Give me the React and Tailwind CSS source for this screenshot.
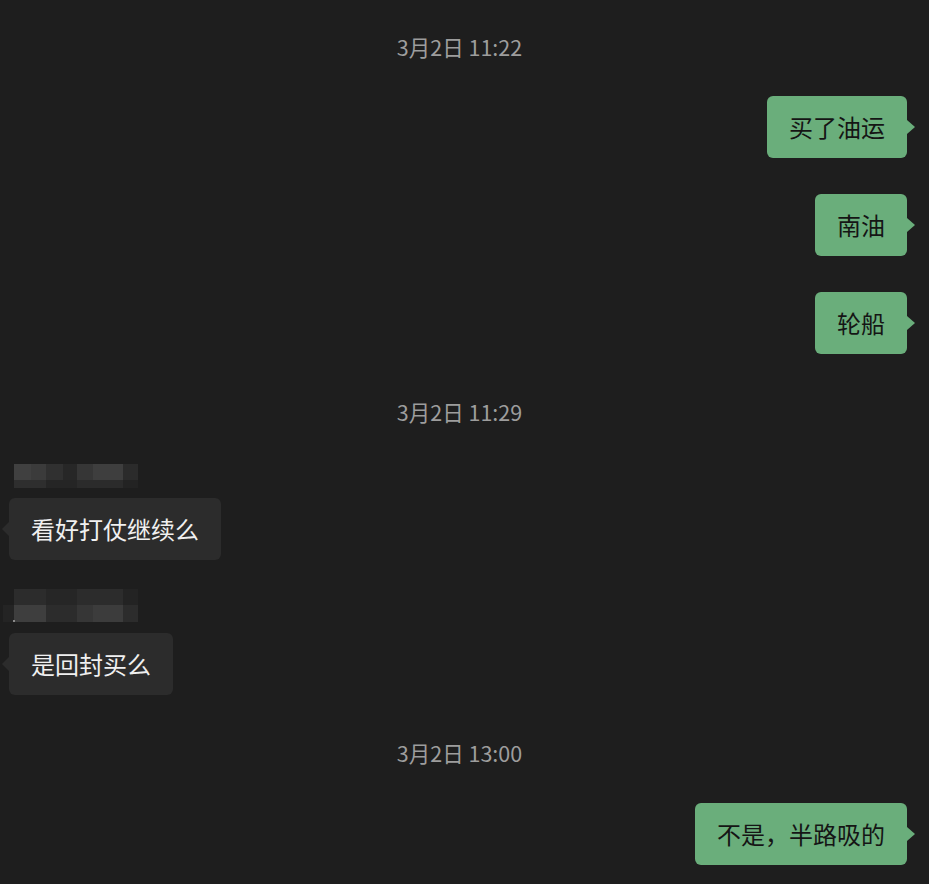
import React from "react";

const font = { fontFamily: '"Noto Sans CJK SC", "Noto Sans", sans-serif' };

function Time({ text, className }) {
  return (
    <div className={"flex h-[28px] items-center justify-center text-[21.5px] text-[#9d9d9d] " + className}>
      {text}
    </div>
  );
}

function Right({ text, className }) {
  return (
    <div className={"flex justify-end pr-[14px] " + className}>
      <div className="flex items-center">
        <div className="flex h-[62px] items-center rounded-[6px] bg-[#6aae7b] px-[22px] text-[24px] leading-none text-[#151515]">
          {text}
        </div>
        <div className="h-0 w-0 border-y-[7px] border-l-[8px] border-y-transparent border-l-[#6aae7b]" />
      </div>
    </div>
  );
}

function Left({ text, className }) {
  return (
    <div className={"flex justify-start pl-[2px] " + className}>
      <div className="flex items-center">
        <div className="h-0 w-0 border-y-[7px] border-r-[7px] border-y-transparent border-r-[#2c2c2c]" />
        <div className="flex h-[62px] items-center rounded-[6px] bg-[#2c2c2c] px-[22px] text-[24px] leading-none text-[#f0f0f0]">
          {text}
        </div>
      </div>
    </div>
  );
}

function Mosaic1() {
  return (
    <svg width="140" height="24" className="block">
      <rect x="14" y="0" width="17" height="16" fill="#404040" />
      <rect x="31" y="0" width="15" height="16" fill="#3b3b3b" />
      <rect x="46" y="0" width="17" height="16" fill="#303030" />
      <rect x="63" y="0" width="14" height="16" fill="#272727" />
      <rect x="77" y="0" width="16" height="16" fill="#363636" />
      <rect x="93" y="0" width="30" height="16" fill="#3e3e3e" />
      <rect x="123" y="0" width="15" height="16" fill="#2b2b2b" />
      <rect x="14" y="16" width="32" height="8" fill="#2e2e2e" />
      <rect x="46" y="16" width="31" height="8" fill="#252525" />
      <rect x="77" y="16" width="46" height="8" fill="#2b2b2b" />
      <rect x="123" y="16" width="15" height="8" fill="#232323" />
    </svg>
  );
}

function Mosaic2() {
  return (
    <svg width="140" height="33" className="block">
      <rect x="14" y="0" width="32" height="16" fill="#2c2c2c" />
      <rect x="46" y="0" width="31" height="16" fill="#262626" />
      <rect x="77" y="0" width="46" height="16" fill="#2c2c2c" />
      <rect x="123" y="0" width="15" height="16" fill="#232323" />
      <rect x="3" y="16" width="11" height="17" fill="#242424" />
      <rect x="14" y="16" width="32" height="17" fill="#3e3e3e" />
      <rect x="46" y="16" width="31" height="17" fill="#2c2c2c" />
      <rect x="77" y="16" width="16" height="17" fill="#363636" />
      <rect x="93" y="16" width="30" height="17" fill="#3c3c3c" />
      <rect x="123" y="16" width="15" height="17" fill="#2c2c2c" />
      <rect x="13" y="31" width="2" height="2" fill="#8a8a8a" />
    </svg>
  );
}

export default function App() {
  return (
    <div className="h-[884px] w-[929px] overflow-hidden bg-[#1e1e1e] pt-[33px]" style={font}>
      <Time text="3月2日 11:22" className="pr-[10px]" />
      <Right text="买了油运" className="mt-[35px]" />
      <Right text="南油" className="mt-[36px]" />
      <Right text="轮船" className="mt-[36px]" />
      <Time text="3月2日 11:29" className="mt-[44px] pr-[10px]" />
      <div className="mt-[38px]"><Mosaic1 /></div>
      <Left text="看好打仗继续么" className="mt-[10px]" />
      <div className="mt-[29px]"><Mosaic2 /></div>
      <Left text="是回封买么" className="mt-[11px]" />
      <Time text="3月2日 13:00" className="mt-[44px] pr-[10px]" />
      <Right text="不是，半路吸的" className="mt-[36px]" />
    </div>
  );
}
